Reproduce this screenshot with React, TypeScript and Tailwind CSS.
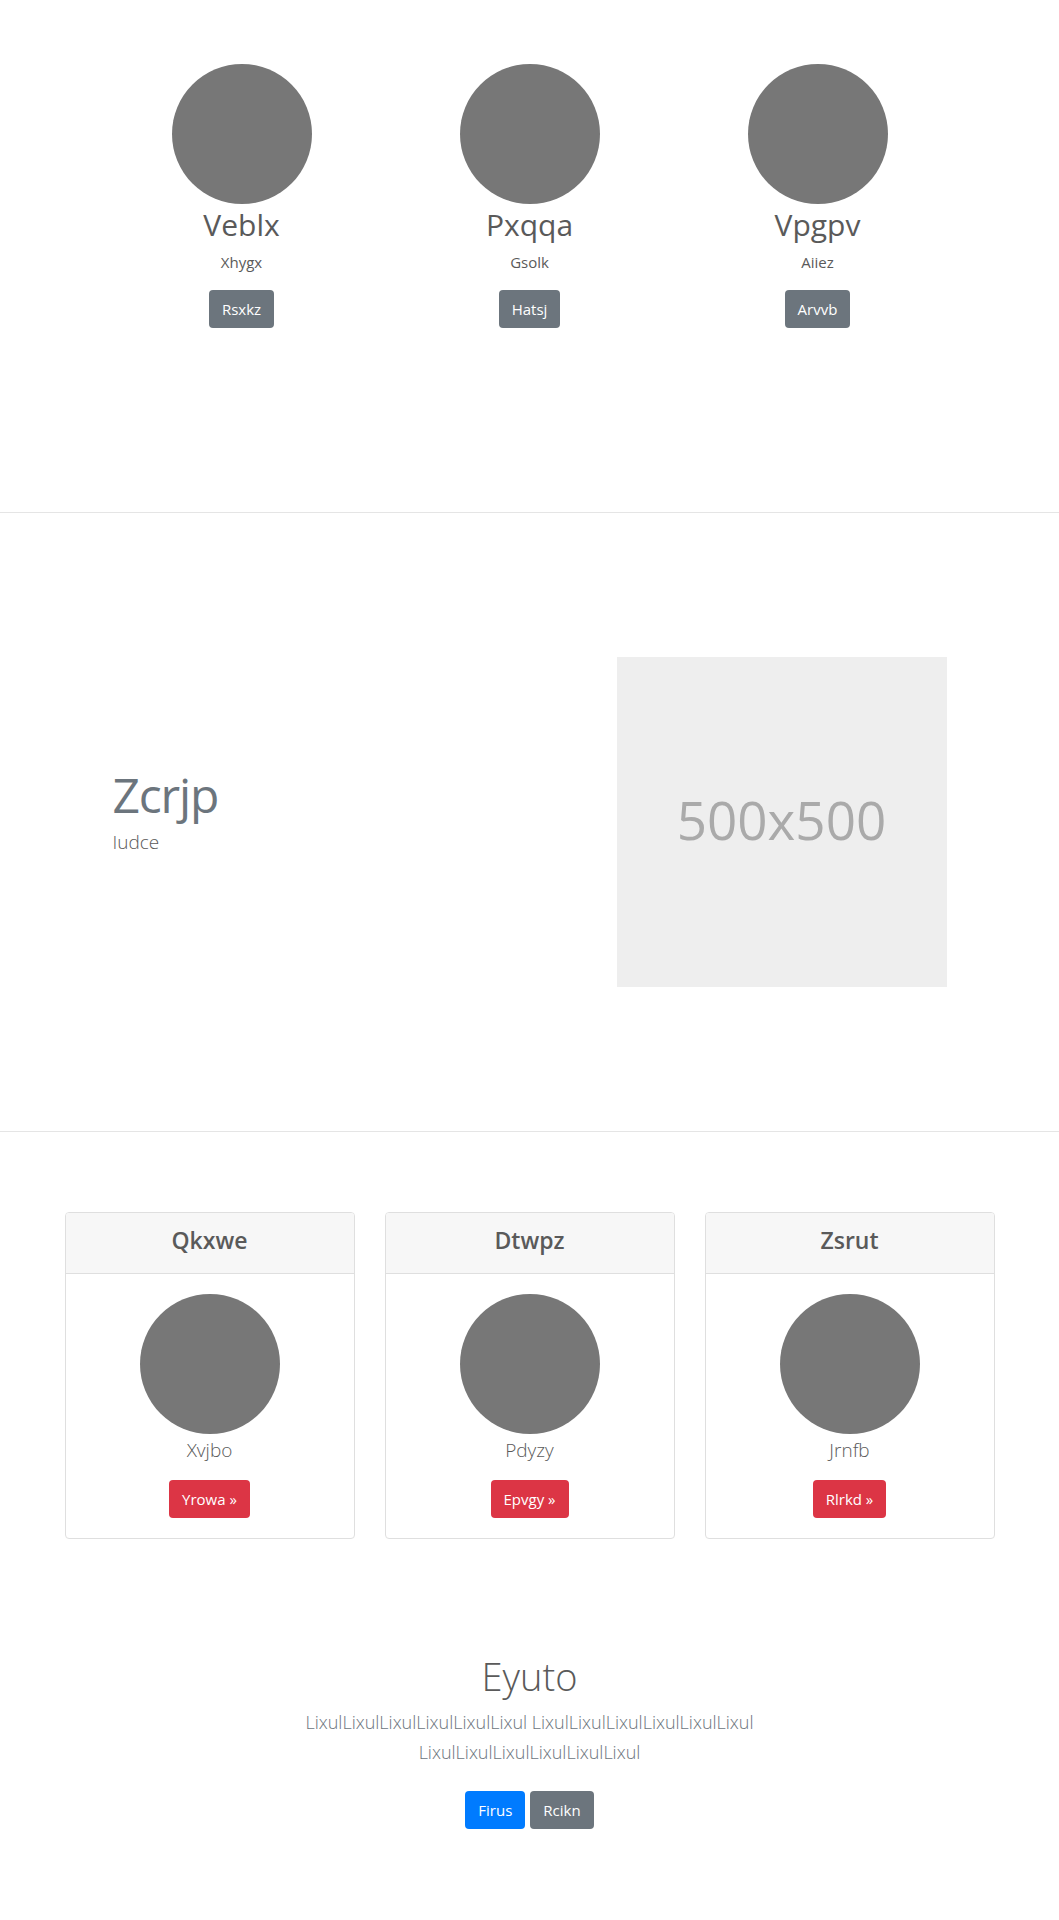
import type { ReactNode } from "react";

const people = [
  { name: "Veblx", text: "Xhygx", action: "Rsxkz" },
  { name: "Pxqqa", text: "Gsolk", action: "Hatsj" },
  { name: "Vpgpv", text: "Aiiez", action: "Arvvb" },
];

const cards = [
  { title: "Qkxwe", text: "Xvjbo", action: "Yrowa »" },
  { title: "Dtwpz", text: "Pdyzy", action: "Epvgy »" },
  { title: "Zsrut", text: "Jrnfb", action: "Rlrkd »" },
];

const tones = {
  primary: "bg-[#007bff] hover:bg-[#0069d9]",
  secondary: "bg-[#6c757d] hover:bg-[#5a6268]",
  danger: "bg-[#dc3545] hover:bg-[#c82333]",
};

function LinkButton({ tone, children }: { tone: keyof typeof tones; children: ReactNode }) {
  return (
    <a href="#" className={`inline-block rounded-[4px] px-[13px] py-[7px] text-[15px] leading-6 text-white ${tones[tone]}`}>
      {children}
    </a>
  );
}

function Avatar() {
  return <div className="size-[140px] rounded-full bg-[#777]" />;
}

export default function App() {
  return (
    <main className="min-h-screen bg-white font-['Open_Sans','Noto_Sans',sans-serif] text-[15px] leading-6 text-[#5a5a5a]">
      <section className="mx-auto grid max-w-[864px] grid-cols-3 pt-16">
        {people.map((p) => (
          <div key={p.name} className="flex flex-col items-center text-center">
            <Avatar />
            <h2 className="mb-1 text-[30px] leading-[42px]">{p.name}</h2>
            <p className="mb-4">{p.text}</p>
            <LinkButton tone="secondary">{p.action}</LinkButton>
          </div>
        ))}
      </section>

      <hr className="mt-46 border-t border-[#e5e5e5]" />

      <section className="mx-auto flex max-w-[864px] items-center py-36">
        <div className="w-7/12 px-[15px]">
          <h2 className="mb-0.5 text-[48px] leading-[60px] tracking-tight text-[#6c757d]">Zcrjp</h2>
          <p className="mb-[22px] text-[19px] leading-[30px] font-light">Iudce</p>
        </div>
        <div className="w-5/12 px-[15px]">
          <div className="flex aspect-square w-full items-center justify-center bg-[#eee] pb-1 text-[53px] text-[#aaa]">
            500x500
          </div>
        </div>
      </section>

      <hr className="border-t border-[#e5e5e5]" />

      <section className="mx-auto mt-20 grid max-w-[930px] grid-cols-3 gap-[30px]">
        {cards.map((c) => (
          <article key={c.title} className="overflow-hidden rounded-[4px] border border-[#dfdfdf] text-center">
            <header className="border-b border-[#dfdfdf] bg-[#f7f7f7] px-5 pt-3 pb-[18px]">
              <h4 className="text-[23px] leading-[30px] font-semibold">{c.title}</h4>
            </header>
            <div className="flex flex-col items-center p-5">
              <Avatar />
              <p className="mb-[14px] text-[19px] leading-8 font-light">{c.text}</p>
              <LinkButton tone="danger">{c.action}</LinkButton>
            </div>
          </article>
        ))}
      </section>

      <section className="mx-auto mt-28 max-w-[480px] pb-16 text-center">
        <h1 className="mb-1.5 text-[38px] leading-[50px] font-light">Eyuto</h1>
        <p className="mb-6 text-[18px] leading-[30px] font-light text-[#6c757d]">
          LixulLixulLixulLixulLixulLixul LixulLixulLixulLixulLixulLixul LixulLixulLixulLixulLixulLixul
        </p>
        <div className="flex justify-center gap-[5px]">
          <LinkButton tone="primary">Firus</LinkButton>
          <LinkButton tone="secondary">Rcikn</LinkButton>
        </div>
      </section>
    </main>
  );
}
